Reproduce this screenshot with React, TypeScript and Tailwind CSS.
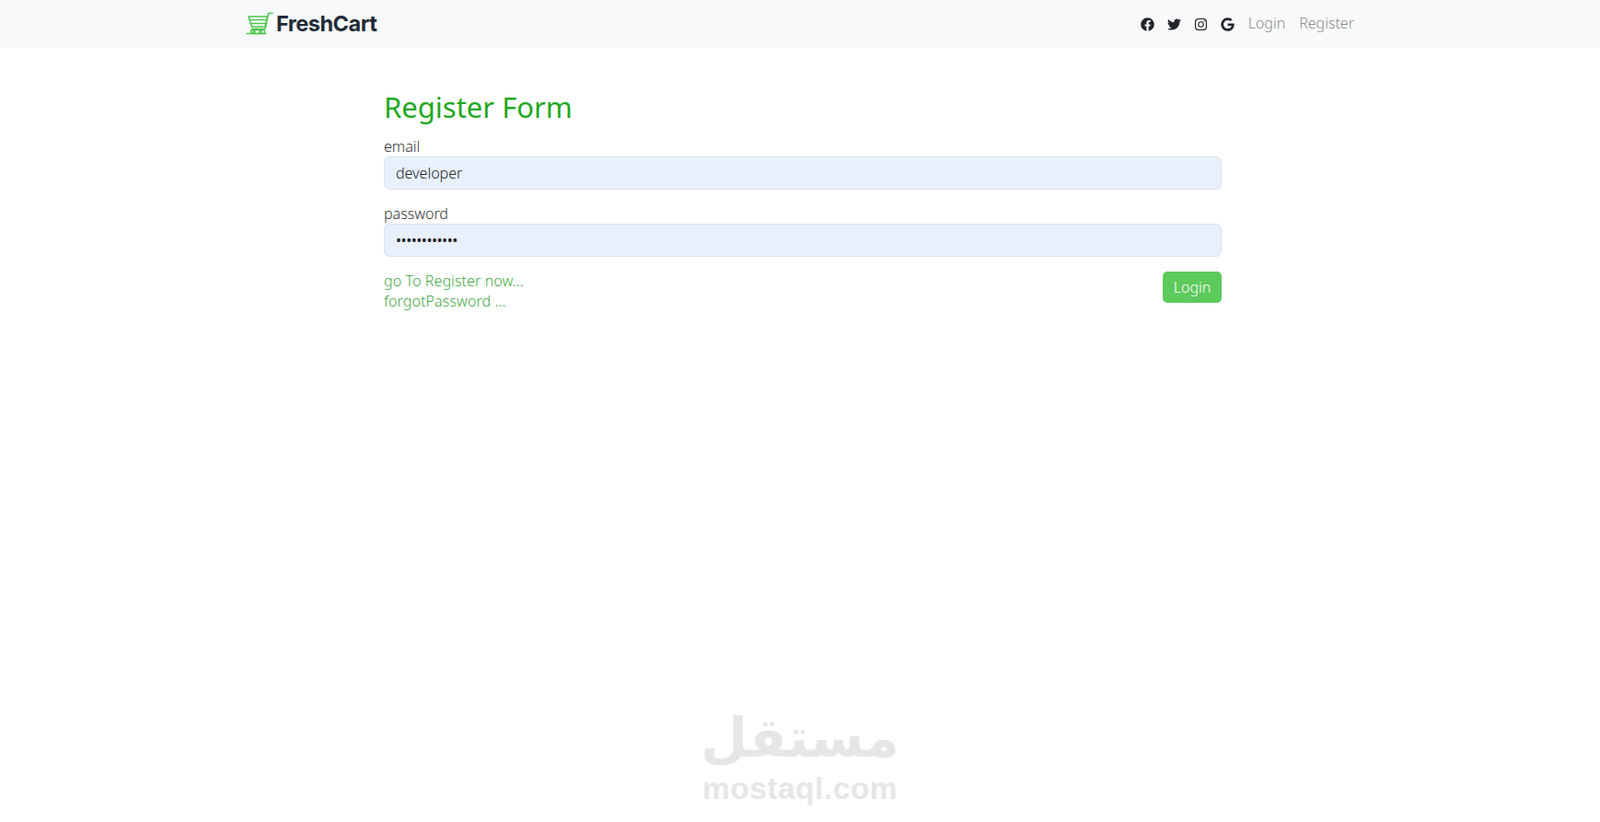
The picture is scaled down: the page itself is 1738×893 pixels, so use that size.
import { FaFacebook, FaGoogle, FaInstagram, FaTwitter } from 'react-icons/fa';

const CartLogo = () => (
  <svg className="w-[30px] h-[26px]" viewBox="0 0 30 26" fill="none" stroke="#4fc94f" strokeWidth={1.6}>
    <path d="M29 1.5h-4.5L21 18.5H6.5" strokeLinecap="round" strokeLinejoin="round" />
    <path d="M3 5h20.5l-2.5 11H6.5z" strokeLinejoin="round" />
    <path d="M4.5 8.5h18M5.5 12.5h16" />
    <path d="M1 23.5h21" strokeLinecap="round" />
    <rect x="5.5" y="19.5" width="15" height="4" rx="2" />
    <circle cx="9" cy="21.5" r="1" />
    <circle cx="16" cy="21.5" r="1" />
  </svg>
);

const Field = ({ label, type, value, className }: { label: string; type: string; value: string; className: string }) => (
  <div className="mb-[13px]">
    <label className="block h-6 pt-px leading-6 text-[16px] font-light text-[#333]">{label}</label>
    <input
      type={type}
      value={value}
      readOnly
      className={`block w-full h-9 px-3 rounded-md border border-[#dee2e6] bg-[#e8f0fe] text-[16px] outline-none ${className}`}
    />
  </div>
);

export default function App() {
  return (
    <div className="relative min-h-[893px] bg-white overflow-hidden font-['Noto_Sans',sans-serif]">
      <nav className="h-[52px] bg-[#f8f9fa]">
        <div className="w-[1204px] h-full mx-auto flex items-center justify-between">
          <a className="flex items-center gap-[3px]">
            <CartLogo />
            <span className="font-['Inter',sans-serif] font-bold text-[23.5px] tracking-[-0.5px] text-[#212b36]">FreshCart</span>
          </a>
          <div className="flex items-center">
            <div className="flex items-center gap-[14px] text-[15px] text-[#212529]">
              <FaFacebook />
              <FaTwitter />
              <FaInstagram />
              <FaGoogle />
            </div>
            <a className="ml-[15px] mb-[2px] text-[16px] font-light text-[#8a8c8e]">Login</a>
            <a className="ml-[15px] mb-[2px] text-[16px] font-light text-[#8a8c8e]">Register</a>
          </div>
        </div>
      </nav>

      <main className="w-[910px] ml-[417px] pt-[45px]">
        <h1 className="h-[38px] leading-[38px] mb-[11px] text-[31px] font-normal text-[#1fa81f]">Register Form</h1>
        <form>
          <Field label="email" type="text" value="developer" className="font-light text-[#212529]" />
          <Field label="password" type="password" value="developer123" className="tracking-[-0.45px] text-[#212529]" />
          <div className="flex items-start justify-between mt-[15px]">
            <div className="text-[16px] leading-[22px] font-light tracking-[0.1px] text-[#45a845]">
              <a className="block">go To Register now...</a>
              <a className="block">forgotPassword ...</a>
            </div>
            <button type="button" className="w-16 h-[34px] mt-px rounded-[5px] bg-[#5cca5c] text-white text-[16px] font-light">
              Login
            </button>
          </div>
        </form>
      </main>

      {/* mostaql watermark */}
      <div className="absolute left-[763px] bottom-[17px] w-[212px] flex flex-col items-center text-[#e6e6e6] pointer-events-none">
        <span dir="rtl" className="font-['DejaVu_Sans',sans-serif] font-bold text-[59px] leading-[70px]">مستقل</span>
        <span className="font-['Liberation_Sans',sans-serif] font-bold text-[33.5px] leading-[39px] tracking-[0.5px]">mostaql.com</span>
      </div>
    </div>
  );
}
